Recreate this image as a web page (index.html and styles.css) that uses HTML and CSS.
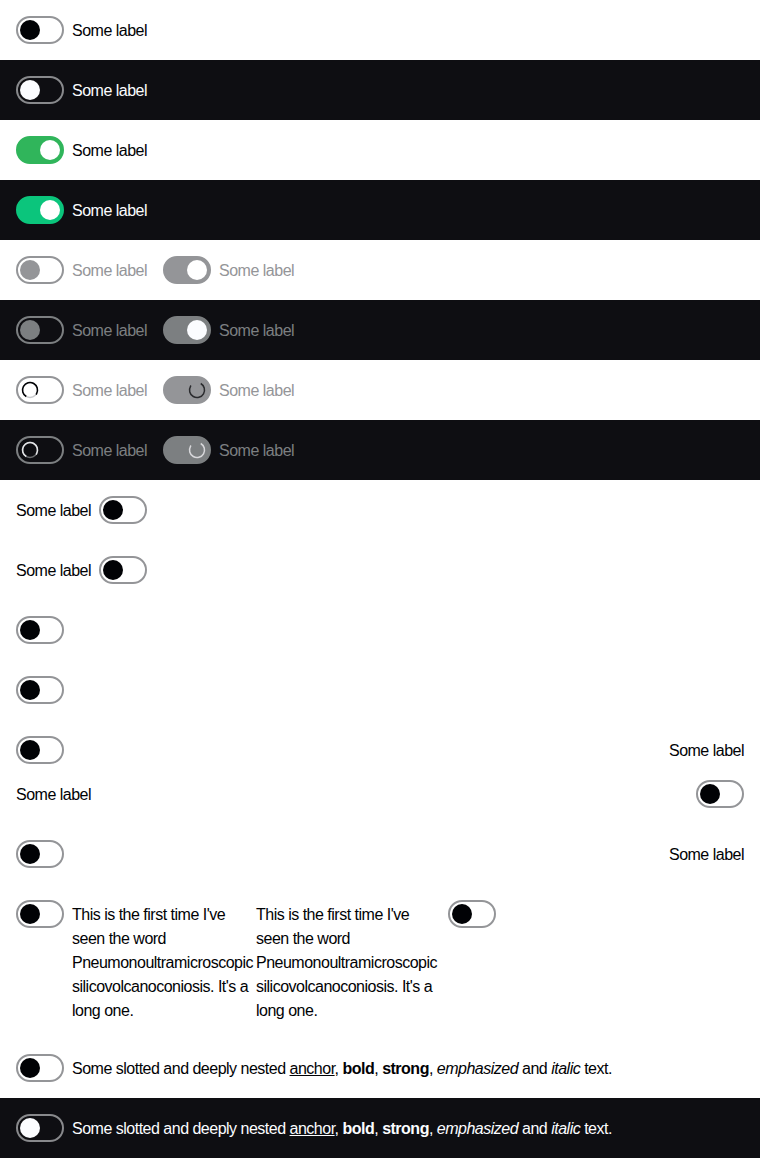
FILE: index.html
```html
<!DOCTYPE html>
<html lang="en">
<head>
<meta charset="utf-8">
<title>Switch</title>
<link rel="stylesheet" href="styles.css">
</head>
<body>
<div class="row">
  <label class="sw"><span class="toggle"><span class="knob"></span></span><span class="lbl">Some label</span></label>
</div>
<div class="row dark">
  <label class="sw"><span class="toggle"><span class="knob"></span></span><span class="lbl">Some label</span></label>
</div>
<div class="row">
  <label class="sw on"><span class="toggle"><span class="knob"></span></span><span class="lbl">Some label</span></label>
</div>
<div class="row dark">
  <label class="sw on"><span class="toggle"><span class="knob"></span></span><span class="lbl">Some label</span></label>
</div>
<div class="row">
  <label class="sw disabled"><span class="toggle"><span class="knob"></span></span><span class="lbl">Some label</span></label>
  <label class="sw on disabled"><span class="toggle"><span class="knob"></span></span><span class="lbl">Some label</span></label>
</div>
<div class="row dark">
  <label class="sw disabled"><span class="toggle"><span class="knob"></span></span><span class="lbl">Some label</span></label>
  <label class="sw on disabled"><span class="toggle"><span class="knob"></span></span><span class="lbl">Some label</span></label>
</div>
<div class="row">
  <label class="sw loading"><span class="toggle"><svg class="spinner" viewBox="0 0 20 20"><circle class="track" cx="10" cy="10" r="7.5"/><circle class="arc" cx="10" cy="10" r="7.5"/></svg></span><span class="lbl">Some label</span></label>
  <label class="sw on loading"><span class="toggle"><svg class="spinner" viewBox="0 0 20 20"><circle class="track" cx="10" cy="10" r="7.5"/><circle class="arc" cx="10" cy="10" r="7.5"/></svg></span><span class="lbl">Some label</span></label>
</div>
<div class="row dark">
  <label class="sw loading"><span class="toggle"><svg class="spinner" viewBox="0 0 20 20"><circle class="track" cx="10" cy="10" r="7.5"/><circle class="arc" cx="10" cy="10" r="7.5"/></svg></span><span class="lbl">Some label</span></label>
  <label class="sw on loading"><span class="toggle"><svg class="spinner" viewBox="0 0 20 20"><circle class="track" cx="10" cy="10" r="7.5"/><circle class="arc" cx="10" cy="10" r="7.5"/></svg></span><span class="lbl">Some label</span></label>
</div>
<div class="row">
  <label class="sw"><span class="lbl">Some label</span><span class="toggle"><span class="knob"></span></span></label>
</div>
<div class="row">
  <label class="sw"><span class="lbl">Some label</span><span class="toggle"><span class="knob"></span></span></label>
</div>
<div class="row">
  <label class="sw" aria-label="Some label"><span class="toggle"><span class="knob"></span></span></label>
</div>
<div class="row">
  <label class="sw" aria-label="Some label"><span class="toggle"><span class="knob"></span></span></label>
</div>
<div class="row stack">
  <label class="sw stretch"><span class="toggle"><span class="knob"></span></span><span class="lbl">Some label</span></label>
  <label class="sw stretch"><span class="lbl">Some label</span><span class="toggle"><span class="knob"></span></span></label>
</div>
<div class="row">
  <label class="sw stretch"><span class="toggle"><span class="knob"></span></span><span class="lbl">Some label</span></label>
</div>
<div class="row tight">
  <label class="sw wrap"><span class="toggle"><span class="knob"></span></span><span class="lbl">This is the first time I've seen the word Pneumonoultramicroscopic<wbr>silicovolcanoconiosis. It's a long one.</span></label>
  <label class="sw wrap"><span class="lbl">This is the first time I've seen the word Pneumonoultramicroscopic<wbr>silicovolcanoconiosis. It's a long one.</span><span class="toggle"><span class="knob"></span></span></label>
</div>
<div class="row">
  <label class="sw"><span class="toggle"><span class="knob"></span></span><span class="lbl">Some slotted and deeply nested <a href="#">anchor</a>, <b>bold</b>, <strong>strong</strong>, <em>emphasized</em> and <i>italic</i> text.</span></label>
</div>
<div class="row dark">
  <label class="sw"><span class="toggle"><span class="knob"></span></span><span class="lbl">Some slotted and deeply nested <a href="#">anchor</a>, <b>bold</b>, <strong>strong</strong>, <em>emphasized</em> and <i>italic</i> text.</span></label>
</div>
</body>
</html>
```
FILE: styles.css
```css
html, body {
  margin: 0;
  padding: 0;
  background: #ffffff;
}
body {
  font-family: "Liberation Sans", Arial, sans-serif;
  font-size: 16px;
  line-height: 24px;
  letter-spacing: -0.5px;
  color: #010205;
}
.row {
  display: flex;
  align-items: flex-start;
  gap: 16px;
  padding: 16px;
  background: #ffffff;
  color: #010205;
}
.row.dark {
  background: #0e0e12;
  color: #fbfcff;
}
.row.stack {
  flex-direction: column;
  align-items: stretch;
}
.row.tight {
  gap: 0;
}
.sw {
  display: inline-flex;
  align-items: center;
  gap: 8px;
  min-height: 28px;
}
.lbl {
  padding-top: 2px;
}
.sw.stretch {
  flex: 1;
  justify-content: space-between;
}
.row.stack .sw.stretch {
  width: 100%;
}
.sw.wrap {
  width: 240px;
  align-items: flex-start;
}
.sw.wrap .lbl {
  width: 184px;
  padding-top: 3px;
  margin-bottom: -1px;
  overflow-wrap: break-word;
}
.lbl a {
  color: inherit;
  text-decoration: underline;
}
.toggle {
  flex: none;
  box-sizing: border-box;
  width: 48px;
  height: 28px;
  border: 2px solid #949598;
  border-radius: 14px;
  padding: 2px;
  display: flex;
  align-items: center;
  justify-content: flex-start;
  background: transparent;
}
.knob {
  width: 20px;
  height: 20px;
  border-radius: 50%;
  background: #010205;
}
.dark .toggle {
  border-color: #88898c;
}
.dark .knob {
  background: #fbfcff;
}
/* checked */
.sw.on .toggle {
  justify-content: flex-end;
  background: #30b55b;
  border-color: #30b55b;
}
.sw.on .knob {
  background: #ffffff;
}
.dark .sw.on .toggle {
  background: #0bc57c;
  border-color: #0bc57c;
}
/* disabled / loading */
.sw.disabled .lbl,
.sw.loading .lbl {
  color: #949598;
}
.sw.disabled .toggle,
.sw.loading .toggle {
  border-color: #949598;
}
.sw.disabled .knob {
  background: #949598;
}
.sw.on.disabled .toggle,
.sw.on.loading .toggle {
  background: #949598;
  border-color: #949598;
}
.sw.on.disabled .knob {
  background: #ffffff;
}
.dark .sw.disabled .lbl,
.dark .sw.loading .lbl {
  color: #7c7f81;
}
.dark .sw.disabled .toggle,
.dark .sw.loading .toggle {
  border-color: #7c7f81;
}
.dark .sw.disabled .knob {
  background: #7c7f81;
}
.dark .sw.on.disabled .toggle,
.dark .sw.on.loading .toggle {
  background: #7c7f81;
  border-color: #7c7f81;
}
.dark .sw.on.disabled .knob {
  background: #fbfcff;
}
.spinner {
  width: 20px;
  height: 20px;
  display: block;
}
.spinner circle {
  fill: none;
  stroke-width: 1.5;
}
.spinner .track {
  stroke: #c8c9cc;
}
.spinner .arc {
  stroke: #010205;
  stroke-dasharray: 36 47.1;
  transform: rotate(120deg);
  transform-origin: 10px 10px;
}
.sw.on .spinner .track {
  stroke: transparent;
}
.sw.on .spinner .arc {
  stroke: #2a2b2e;
  transform: rotate(-60deg);
}
.dark .spinner .track {
  stroke: #6b6d70;
}
.dark .spinner .arc {
  stroke: #e4e5e8;
}
.dark .sw.on .spinner .track {
  stroke: transparent;
}
.dark .sw.on .spinner .arc {
  stroke: #d8d8db;
}
```
